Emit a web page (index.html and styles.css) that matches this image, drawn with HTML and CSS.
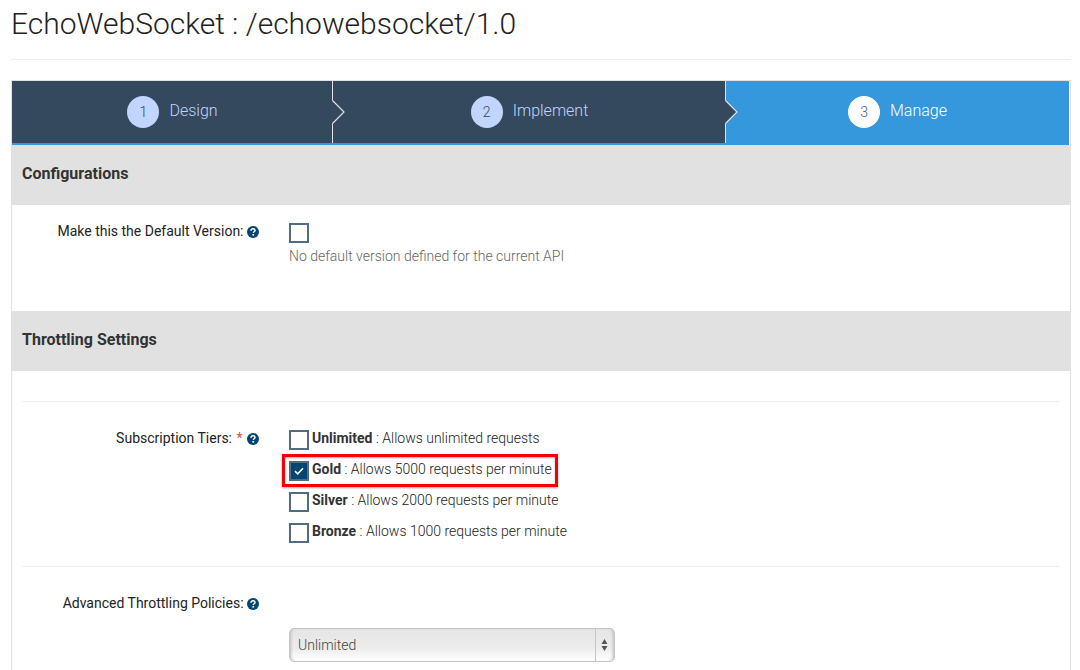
FILE: index.html
```html
<!DOCTYPE html>
<html lang="en">
<head>
<meta charset="utf-8">
<title>EchoWebSocket : /echowebsocket/1.0</title>
<link rel="stylesheet" href="styles.css">
</head>
<body>
<svg class="defs" aria-hidden="true">
  <symbol id="help" viewBox="0 0 12 12">
    <circle cx="6" cy="6" r="6" fill="#044673"/>
    <path d="M4 4.7C4.1 3.4 4.9 2.8 6 2.8c1.200 0 2 .7 2 1.600 0 1.400-1.700 1.300-1.700 2.600" fill="none" stroke="#fff" stroke-width="1.500"/>
    <path d="M5.400 8h1.700v1.600H5.400z" fill="#fff"/>
  </symbol>
</svg>
<main class="page">
  <h1 class="page-title">EchoWebSocket : /echowebsocket/1.0</h1>
  <div class="panel">
    <nav class="wizard" aria-label="API steps">
      <a class="step step-design" href="#design"><span class="step-number">1</span><span class="step-name">Design</span>
        <svg class="step-arrow" viewBox="0 0 13 24" aria-hidden="true"><path d="M0 0L12 12L0 24" fill="#34495e"/><path d="M0.500 0.500L12 12L0.500 23.500" fill="none" stroke="#e1e1e1" stroke-width="1.200"/></svg></a>
      <a class="step step-implement" href="#implement"><span class="step-number">2</span><span class="step-name">Implement</span>
        <svg class="step-arrow" viewBox="0 0 13 24" aria-hidden="true"><path d="M0 0L12 12L0 24" fill="#34495e"/><path d="M0.500 0.500L12 12L0.500 23.500" fill="none" stroke="#e1e1e1" stroke-width="1.200"/></svg></a>
      <a class="step step-manage" href="#manage" aria-current="step"><span class="step-number">3</span><span class="step-name">Manage</span></a>
    </nav>
    <form>
      <h2 class="section-title">Configurations</h2>
      <div class="section config">
        <div class="field">
          <label class="field-label" for="default-version">Make this the Default Version: <svg class="help"><use href="#help"/></svg></label>
          <div class="control">
            <input class="check" type="checkbox" id="default-version">
            <p class="hint">No default version defined for the current API</p>
          </div>
        </div>
      </div>
      <h2 class="section-title">Throttling Settings</h2>
      <div class="section throttling">
        <div class="field tiers-field" role="group" aria-labelledby="tiers-label">
          <div class="field-label" id="tiers-label">Subscription Tiers: <span class="required">*</span> <svg class="help"><use href="#help"/></svg></div>
          <div class="control tiers">
            <label class="tier"><input class="check" type="checkbox"><span><b>Unlimited</b> : Allows unlimited requests</span></label>
            <label class="tier highlighted"><input class="check" type="checkbox" checked><span><b>Gold</b> : Allows 5000 requests per minute</span></label>
            <label class="tier"><input class="check" type="checkbox"><span><b>Silver</b> : Allows 2000 requests per minute</span></label>
            <label class="tier"><input class="check" type="checkbox"><span><b>Bronze</b> : Allows 1000 requests per minute</span></label>
          </div>
        </div>
        <div class="field policy-field">
          <label class="field-label" for="policy">Advanced Throttling Policies: <svg class="help"><use href="#help"/></svg></label>
          <div class="control policy">
            <select class="select" id="policy"><option>Unlimited</option></select>
            <svg class="select-arrows" viewBox="0 0 7 12" aria-hidden="true"><path d="M3.500 0L6.500 5H.5zM3.500 12L6.500 7H.5z" fill="#555"/></svg>
          </div>
        </div>
      </div>
    </form>
  </div>
</main>
</body>
</html>
```
FILE: styles.css
```css
* { box-sizing: border-box; }
body {
  margin: 0;
  background: #fff;
  color: #222;
  font: 300 14px/20px Roboto, "Liberation Sans", sans-serif;
  overflow: hidden;
}
.defs { position: absolute; width: 0; height: 0; }
.page { padding: 0 9px 0 11px; }
.page-title {
  margin: 0 0 20px;
  padding: 4px 0 15px;
  border-bottom: 1px solid #eee;
  font-size: 30px;
  font-weight: 300;
  line-height: 40px;
}
.panel { border: 1px solid #e1e1e1; }
.wizard { display: flex; margin-right: 1px; }
.step {
  position: relative;
  display: flex;
  align-items: center;
  justify-content: center;
  gap: 10px;
  height: 64px;
  background: #34495e;
  border-bottom: 2px solid #3598dc;
  color: #c1d5ff;
  font-size: 16px;
  font-weight: 300;
  text-decoration: none;
}
.step-design { flex: 321 1 0; box-shadow: inset -1px 0 #e1e1e1; z-index: 2; }
.step-implement { flex: 393 1 0; box-shadow: inset -1px 0 #e1e1e1; z-index: 1; }
.step-manage { flex: 343 1 0; background: #3598dc; color: #fff; }
.step-name { padding-bottom: 2px; }
.step-number {
  width: 32px;
  height: 32px;
  border-radius: 50%;
  background: #c1d5ff;
  color: #34495e;
  font-size: 14px;
  line-height: 32px;
  text-align: center;
}
.step-manage .step-number { background: #fff; color: #34608c; }
.step-arrow { position: absolute; right: -12px; top: 19px; width: 13px; height: 24px; }
.section-title {
  margin: 0;
  padding: 19px 10px 21px;
  background: #e1e1e1;
  color: #333;
  font-size: 16px;
  font-weight: 700;
  line-height: 20px;
}
.section { padding: 0 10px; }
.config { padding-top: 16px; padding-bottom: 45px; }
.throttling { padding-top: 30px; }
.field { display: flex; gap: 30px; }
.field-label { flex: 0 0 237px; text-align: right; font-weight: 400; }
.help { width: 12px; height: 12px; vertical-align: -2px; }
.required { margin: 0 1px; color: #e74c3c; }
.control { flex: 1; }
.check {
  appearance: none;
  display: block;
  flex: none;
  width: 20px;
  height: 20px;
  margin: 2px 0 0;
  border: 2px solid #526b87;
  background: #fff;
}
.check:checked {
  background: #044673 url("data:image/svg+xml,%3Csvg xmlns='http://www.w3.org/2000/svg' viewBox='0 0 16 16'%3E%3Cpath d='M4 8.200L6.700 10.800L12 5.200' fill='none' stroke='white' stroke-width='1.600'/%3E%3C/svg%3E") center / 16px no-repeat;
}
.hint { margin: 3px 0 0; color: #666; }
.tiers-field { border-top: 1px solid #eee; padding-top: 26px; padding-bottom: 23px; }
.tiers { display: flex; flex-direction: column; align-items: flex-start; gap: 9px; }
.tier { display: flex; gap: 3px; }
.tier b { color: #333; font-weight: 700; }
.highlighted { position: relative; }
.highlighted::after {
  content: "";
  position: absolute;
  inset: -5px -6px -6px -7px;
  border: 3px solid #f40006;
  box-shadow: 0 1px 2px #aaa, inset 0 1px 2px #aaa;
  pointer-events: none;
}
.policy-field { flex-wrap: wrap; gap: 0; border-top: 1px solid #eee; padding-top: 26px; }
.policy { position: relative; flex: 0 0 100%; padding: 15px 0 9px 267px; }
.select {
  appearance: none;
  display: block;
  width: 326px;
  height: 34px;
  padding: 0 8px;
  border: 1px solid #c6c6c6;
  border-radius: 5px;
  background: linear-gradient(#c6c6c6, #c6c6c6) right 18px top / 1px 100% no-repeat, linear-gradient(#e6e6e6, #ececec 60%, #fff);
  box-shadow: inset 3px 0 3px -2px #bbb, inset -3px 0 3px -2px #bbb;
  color: #444;
  font: inherit;
}
.select-arrows { position: absolute; left: 579px; top: 26px; width: 7px; height: 12px; pointer-events: none; }
```
